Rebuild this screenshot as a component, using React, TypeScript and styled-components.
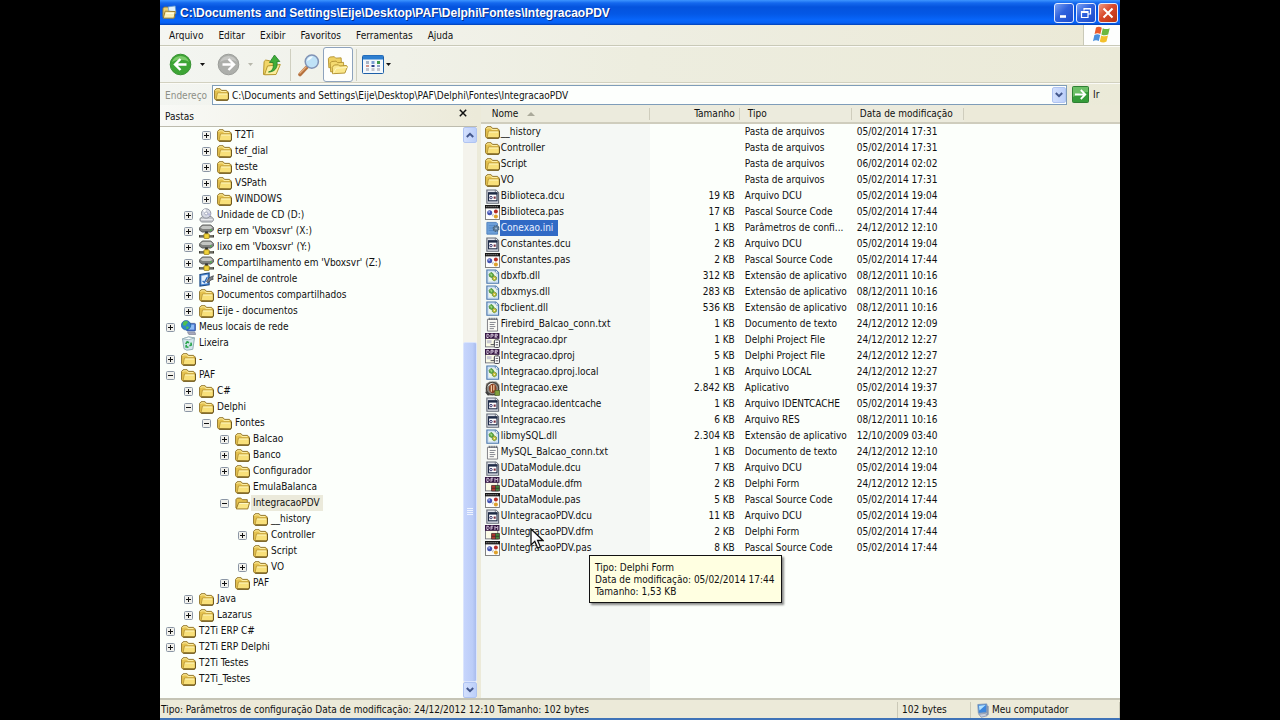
import React from 'react';
import styled, { createGlobalStyle, css } from 'styled-components';

const GlobalStyle = createGlobalStyle`
  * { box-sizing: border-box; }
  body {
    margin: 0;
    background: #000;
    color: #111;
    font-family: "DejaVu Sans Condensed", "Noto Sans", sans-serif;
    font-size: 10px;
    line-height: 16px;
  }
  button, input { font: inherit; color: inherit; }
  button { margin: 0; padding: 0; border: 0; background: none; cursor: default; }
`;

/* ---------- window frame ---------- */

const Window = styled.main`
  position: relative;
  display: flex;
  flex-direction: column;
  height: 100vh;
  min-height: 480px;
  aspect-ratio: 4 / 3;
  margin: 0 auto;
  overflow: hidden;
  background: #ecead9;
  border-bottom: 2px solid #3f73b8;
`;

const TitleBar = styled.header`
  display: flex;
  align-items: center;
  gap: 3px;
  flex: none;
  height: 25px;
  padding: 0 2px;
  background: linear-gradient(#3d95ff 0, #1468ee 3px, #0453dd 7px, #0458e6 14px, #0866fb 20px, #0660f3 23px, #0240b4 25px);
`;

const Title = styled.h1`
  flex: 1;
  margin: 0;
  color: #fff;
  font-size: 12px;
  font-weight: 700;
  font-family: "Liberation Sans", Arial, sans-serif;
  text-shadow: 1px 1px 0 #0a2f8a;
  white-space: nowrap;
`;

const Captions = styled.div`
  display: flex;
  gap: 2px;
`;

const CaptionButton = styled.button<{ $close?: boolean }>`
  display: grid;
  place-items: center;
  width: 20px;
  height: 20px;
  border: 1px solid #e4ecff;
  border-radius: 3px;
  background: ${(p) =>
    p.$close
      ? 'linear-gradient(135deg, #ee9a80, #d9482a 45%, #b8330f)'
      : 'linear-gradient(135deg, #7ba1f4, #2f62dd 45%, #1b4bcc)'};
`;

const MenuRow = styled.div`
  display: flex;
  flex: none;
  height: 21px;
  border-bottom: 1px solid #c9c9b8;
  background: linear-gradient(90deg, #f5f6f2, #eeeee2 50%, #ebe9d6);
`;

const MenuBar = styled.nav`
  display: flex;
  flex: 1;
  gap: 15px;
  padding-left: 9px;
`;

const MenuItem = styled.button`
  height: 20px;
  padding-top: 2px;
`;

const Flag = styled.div`
  display: grid;
  place-items: center;
  width: 37px;
  border-left: 1px solid #c9c9b8;
  background: #fdfefd;
`;

const ToolBar = styled.div`
  display: flex;
  align-items: center;
  flex: none;
  height: 37px;
  padding-left: 8px;
  border-top: 1px solid #fbfbf7;
  border-bottom: 1px solid #d2d1c0;
  background: linear-gradient(90deg, #f3f5f1, #ededdf 50%, #ebead8);
`;

const ToolButton = styled.button<{ $w: number; $on?: boolean }>`
  display: grid;
  place-items: center;
  width: ${(p) => p.$w}px;
  height: 35px;
  ${(p) =>
    p.$on &&
    css`
      border: 1px solid #8ea3bd;
      border-radius: 3px;
      background: #fdfefd;
    `}
`;

const ToolSeparator = styled.span`
  width: 1px;
  height: 32px;
  margin: 0 3px;
  background: #cfcfc0;
`;

const AddressBar = styled.form`
  display: flex;
  align-items: center;
  flex: none;
  height: 22px;
  padding-left: 5px;
  border-top: 1px solid #fbfbf7;
  background: linear-gradient(90deg, #f3f5f1, #ededdf 50%, #ebead8);
`;

const AddressLabel = styled.label`
  width: 47px;
  padding-top: 2px;
  color: #8d8f86;
`;

const AddressField = styled.div`
  display: flex;
  align-items: center;
  flex: 1;
  gap: 2px;
  height: 20px;
  padding: 0 0 0 1px;
  border: 1px solid #7f9db9;
  background: #fdfffd;
`;

const AddressInput = styled.input`
  flex: 1;
  min-width: 0;
  height: 18px;
  padding: 2px 0 0 1px;
  border: 0;
  outline: 0;
  background: transparent;
`;

const GoButton = styled.button`
  display: flex;
  align-items: center;
  gap: 4px;
  width: 53px;
  padding-left: 5px;
`;

const ScrollButton = styled.button`
  display: grid;
  place-items: center;
  flex: none;
  width: 14px;
  height: 16px;
  border: 1px solid #b0c4f2;
  border-radius: 2px;
  background: linear-gradient(90deg, #d3e0fd, #bccffa);
`;

/* ---------- panes ---------- */

const Panes = styled.div`
  display: flex;
  flex: 1;
  min-height: 0;
`;

const TreePane = styled.aside`
  display: flex;
  flex-direction: column;
  flex: none;
  width: 33%;
`;

const PaneHead = styled.div`
  display: flex;
  justify-content: space-between;
  align-items: center;
  flex: none;
  height: 22px;
  padding: 0 8px 0 5px;
  border-bottom: 1px solid #bdbcae;
  background: linear-gradient(90deg, #f8f9f6, #ecead9);
`;

const PaneTitle = styled.h2`
  margin: 0;
  padding-top: 2px;
  font-size: 10px;
  font-weight: 400;
`;

const CloseButton = styled.button`
  display: grid;
  place-items: center;
  align-self: flex-start;
  width: 11px;
  height: 16px;
`;

const TreeBody = styled.div`
  display: flex;
  flex: 1;
  min-height: 0;
  background: #fcfffb;
`;

const Tree = styled.div`
  flex: 1;
  min-width: 0;
  overflow: hidden;
`;

const TreeRow = styled.div<{ $depth: number }>`
  display: flex;
  align-items: center;
  height: 16px;
  padding-left: ${(p) => 6 + p.$depth * 18}px;
  white-space: nowrap;
`;

const ExpanderSlot = styled.span`
  display: flex;
  width: 15px;
`;

const Expander = styled.button`
  display: flex;
`;

const NodeLabel = styled.span<{ $current?: boolean }>`
  margin-left: 1px;
  padding: 0 3px 0 2px;
  background: ${(p) => (p.$current ? '#ebeadb' : 'none')};
`;

const ScrollBar = styled.div`
  display: flex;
  flex-direction: column;
  flex: none;
  width: 14px;
  background: #f4f3ec;
`;

const Track = styled.div`
  display: flex;
  flex-direction: column;
  flex: 1;
`;

const Thumb = styled.div`
  display: grid;
  place-items: center;
  flex: none;
  height: 63%;
  margin-top: auto;
  border: 1px solid #dbe5fd;
  border-radius: 2px;
  background: linear-gradient(90deg, #c6d5fc, #bccdf8 70%, #a9bcee);
`;

const Splitter = styled.div`
  flex: none;
  width: 4px;
  background: #ecead9;
`;

const FilePane = styled.section`
  flex: 1;
  min-width: 0;
  overflow: hidden;
  background: linear-gradient(#f5f8f5, #f5f8f5) 0 0 / 169px 100% no-repeat #fcfffb;
`;

const FileTable = styled.table`
  width: 100%;
  table-layout: fixed;
  border-collapse: separate;
  border-spacing: 0;
  white-space: nowrap;
`;

const HeadCell = styled.th<{ $align?: 'right'; $pad: number }>`
  height: 19px;
  padding: 1px ${(p) => (p.$align ? p.$pad : 0)}px 0 ${(p) => (p.$align ? 0 : p.$pad)}px;
  border-bottom: 2px solid #cfcdbd;
  background: linear-gradient(90deg, #cfcdbd, #cfcdbd) 100% 3px / 1px 12px no-repeat #ecebdd;
  font-weight: 400;
  line-height: 16px;
  text-align: ${(p) => p.$align ?? 'left'};

  &:last-child { background: #ecead9; }
`;

const SortMark = styled.svg`
  margin-left: 9px;
  vertical-align: 1px;
`;

const Cell = styled.td<{ $align?: 'right' }>`
  height: 16px;
  padding: 0 ${(p) => (p.$align ? 5 : 0)}px 0 5px;
  text-align: ${(p) => p.$align ?? 'left'};

  &:first-child { padding-left: 4px; }
`;

const FileName = styled.span`
  display: flex;
  align-items: center;
  height: 16px;
`;

const FileLabel = styled.span<{ $selected?: boolean }>`
  padding: 0 5px 0 1px;
  color: ${(p) => (p.$selected ? '#e8f0ff' : 'inherit')};
  background: ${(p) => (p.$selected ? '#316ac5' : 'none')};
`;

/* ---------- status bar ---------- */

const StatusBar = styled.footer`
  display: flex;
  align-items: flex-end;
  flex: none;
  height: 20px;
  border-top: 2px solid #c5c4b5;
  background: #ecead9;
  white-space: nowrap;
`;

const StatusCell = styled.span<{ $w?: number }>`
  display: flex;
  align-items: center;
  gap: 2px;
  flex: ${(p) => (p.$w ? `0 0 ${p.$w}px` : '1')};
  height: 16px;
  padding-left: ${(p) => (p.$w ? 4 : 1)}px;
  border-right: 1px solid #cbc9b8;
`;

/* ---------- overlays ---------- */

const Tooltip = styled.div`
  position: absolute;
  left: 429px;
  top: 555px;
  padding: 6px 6px 4px 5px;
  border: 1px solid #111;
  background: #ffffe1;
  box-shadow: 2px 2px 2px rgba(0, 0, 0, 0.45);
  line-height: 12px;
  white-space: nowrap;
`;

const Pointer = styled.svg`
  position: absolute;
  left: 370px;
  top: 528px;
`;

/* ---------- icons ---------- */

const Icon = ({ size = 15, children }: { size?: number; children: React.ReactNode }) => (
  <svg width={size} height={size} viewBox="0 0 16 16" aria-hidden="true">
    {children}
  </svg>
);

const FolderIcon = () => (
  <Icon>
    <path d="M.6 12.500V3.600L2.300 1.800h4.200l1.500 1.800h5.400l1.600 1.600v7.300l-1 1.500H2z" fill="#e6c350" stroke="#8f7228" strokeWidth="1" />
    <path d="M1.700 4.200 2.700 3H6l1.300 1.800h5.700" fill="none" stroke="#fdf0a8" strokeWidth="1" />
    <path d="M2.200 13.400 3.600 6.400h11.600v6l-1.200 1.400z" fill="#f8e07a" stroke="#b08e30" strokeWidth=".8" />
    <path d="M4.400 7.500h9.600" stroke="#fff8c0" />
    <path d="M2.500 14h11.800l1.200-1.500V6" fill="none" stroke="#6f5a20" strokeWidth="1.100" />
  </Icon>
);

const OpenFolderIcon = () => (
  <Icon>
    <path d="M1 12.800V3.800L2.400 2.200h3.800l1.500 1.700h5.400v9z" fill="#e6c350" stroke="#8f7228" />
    <path d="m1.400 13.800 2.600-7h11.600l-2 7z" fill="#fae685" stroke="#967828" />
    <path d="M4.800 7.900h9.400" stroke="#fffbd0" />
  </Icon>
);

const WindowFolderIcon = () => (
  <Icon>
    <path d="M1 13V3.800L2.400 2.200h3.800l1.500 1.700h5.800V13z" fill="#e8cf73" stroke="#8f7a3c" />
    <path d="m6.500 2 7.500-1 1 8-7 1z" fill="#dff0fb" stroke="#6aa0cf" strokeWidth=".8" />
    <path d="m1.400 14 2-7.400 10.800.4-1.400 7z" fill="#fbf0b4" stroke="#967828" />
    <path d="M4.600 9h8" stroke="#fffce6" />
  </Icon>
);

const CdIcon = () => (
  <Icon>
    <path d="M1 11.200 4 9h9l2.300 2.400v2L13.600 15H3L1 13.400z" fill="#c2c4c9" stroke="#777b82" strokeWidth=".8" />
    <path d="M2 12.400h12.600" stroke="#f2f3f5" />
    <circle cx="7.600" cy="5.800" r="5" fill="#d6d9e4" stroke="#858995" strokeWidth=".9" />
    <path d="M7.600 5.800 4 2.600A5 5 0 0 1 7 1z" fill="#fff" />
    <path d="m7.600 5.800 4 2.600a5 5 0 0 0 .8-2.600z" fill="#b6b7da" />
    <circle cx="7.600" cy="5.800" r="1.600" fill="#fff" stroke="#8a8fa6" strokeWidth=".7" />
  </Icon>
);

const NetDriveIcon = () => (
  <Icon>
    <path d="M.6 4 3.600 1h9l3 3v2.400L12.600 8.600H3.400L.6 6.600z" fill="#80827f" stroke="#444644" strokeWidth=".8" />
    <path d="M1.400 4 4 1.900h8.400L14.600 4l-2.400 1.200H3.800z" fill="#c4c6c3" />
    <circle cx="12.600" cy="6.400" r=".9" fill="#3ac13a" />
    <path d="M8 8v3" stroke="#333" strokeWidth="3" />
    <path d="M0 11.800h16v2.600H0z" fill="#3c3c34" />
    <path d="M1 12.400h14v.8H1z" fill="#b9b9ab" />
    <rect x="5.300" y="10.400" width="5.600" height="5" rx=".6" fill="#f2d43a" stroke="#8d761a" strokeWidth=".8" />
  </Icon>
);

const ControlPanelIcon = () => (
  <Icon>
    <path d="M1 2.600 10.800 1v12.600L1 15z" fill="#4d8bd8" stroke="#1d4a84" strokeWidth="1.200" />
    <path d="M2.600 4 9.200 3v9L2.600 13z" fill="#e6f1fc" />
    <path d="m3.800 9.600 2 1.600 3-5.600" fill="none" stroke="#2b68b8" strokeWidth="1.500" />
    <path d="m8 10 3-4 4.400-2-1 2.600 1 1-2.600.9-3.400 3z" fill="#7c8085" stroke="#3c3f44" strokeWidth=".8" />
  </Icon>
);

const NetworkIcon = () => (
  <Icon>
    <rect x="6" y="3.600" width="9.400" height="8.200" rx="1" fill="#4a76d0" stroke="#304d92" strokeWidth=".8" />
    <rect x="7.600" y="5" width="6.400" height="5.200" fill="#8fbcf6" />
    <path d="M7 13.200h8l.6 2.300H8.400z" fill="#a6a9be" stroke="#6a6d84" strokeWidth=".6" />
    <circle cx="5.400" cy="5.600" r="5" fill="#2f86cc" stroke="#1c5a92" strokeWidth=".7" />
    <path d="M2.400 2.400c2-1.800 4.600-1.400 5 0 .3 1.400-1.700 1.400-2 2.800S3 6 2 5.200zM5.400 7c1.800-.3 3 .2 3 1.200L6 10z" fill="#4fc04f" />
  </Icon>
);

const BinIcon = () => (
  <Icon>
    <path d="m1.600 3 1.600 10.600 3 1.600 6.400-1L14.400 2 8 1z" fill="#d3e6ec" stroke="#85a2ad" strokeWidth=".9" />
    <path d="M1.600 3 8.400 4l6-2L8 1z" fill="#f6fbfc" stroke="#8fa9b3" strokeWidth=".8" />
    <path d="m5 8.600 1.600-2.400 2 1M10.600 7l.4 2.600-2 .8M8 12l-2.600-.4.200-2" fill="none" stroke="#2aa54a" strokeWidth="1.700" />
  </Icon>
);

const PlusBox = ({ open }: { open: boolean }) => (
  <svg width="9" height="9" viewBox="0 0 9 9" aria-hidden="true">
    <rect x=".5" y=".5" width="8" height="8" rx="1" fill="#f1f1ec" stroke="#8b96a5" />
    <path d={open ? 'M2 4.500h5' : 'M2 4.500h5M4.500 2v5'} stroke="#111" />
  </svg>
);

const Page = ({ fill, edge }: { fill: string; edge: string }) => (
  <>
    <path d="M2 1h9.500L14.500 4v11.200H2z" fill={fill} stroke={edge} strokeWidth="1.200" />
    <path d="M11 1v3.400h3.400" fill="#fff" stroke={edge} strokeWidth=".9" />
  </>
);

const DcuIcon = () => (
  <Icon>
    <Page fill="#dfe2ea" edge="#666c78" />
    <rect x="3.800" y="4" width="9" height="8.600" fill="#fff" stroke="#1f2c48" strokeWidth="1.200" />
    <path d="M3.800 5h9" stroke="#1f2c48" strokeWidth="2" />
    <circle cx="6.400" cy="9.200" r="1.300" fill="none" stroke="#2b2b66" strokeWidth="1" />
    <path d="M9.200 8h2.200v2.400H9.200z" fill="#7a2f42" />
  </Icon>
);

const PasIcon = () => (
  <Icon>
    <rect x=".6" y="2" width="14.800" height="13.400" fill="#fdfdfd" stroke="#6c6c6c" strokeWidth=".9" />
    <path d="M0 1.800h16" stroke="#161616" strokeWidth="3.600" />
    <path d="M1.500 1.700h13" stroke="#a8a8a8" strokeWidth="1.200" strokeDasharray="1 1.200" />
    <circle cx="5" cy="8.200" r="2.700" fill="#4252b2" />
    <circle cx="4.400" cy="7.400" r=".9" fill="#b7c1f1" />
    <circle cx="11.600" cy="7" r="2.100" fill="#b42a24" />
    <circle cx="11.600" cy="12.200" r="2.200" fill="#dfa12a" />
    <path d="M8.800 9.500 8 12" stroke="#999" strokeWidth=".8" />
  </Icon>
);

const IniIcon = () => (
  <Icon>
    <path d="M2 1.500h10l1.400 1.400V14H2z" fill="#6c9fd8" stroke="#5283bf" />
    <path d="M4 5h6M4 7.500h5M4 10h6" stroke="#4f86c6" />
    <circle cx="11.800" cy="8" r="3" fill="#5d7c9a" stroke="#46647f" strokeWidth="1.300" strokeDasharray="1.500 .8" />
    <circle cx="11.800" cy="8" r="1" fill="#a5c2dd" />
  </Icon>
);

const DllIcon = () => (
  <Icon>
    <Page fill="#cfe2f5" edge="#4c78ac" />
    <rect x="4" y="3.400" width="8" height="9.600" rx="1" fill="#eef6e6" />
    <path d="m4.400 5.600 2-2 2.400 1.600.2 2.400-2 1.400-2.200-1z" fill="#69b548" stroke="#37802f" strokeWidth=".8" />
    <path d="m7.800 8.800 2-1.600 2.400 1.600-.2 2.600-2.200 1.200-2-1.400z" fill="#cfc03a" stroke="#4f8430" strokeWidth=".8" />
    <path d="m6 5.600 1.200 1M9.400 9.600l1.200.8" stroke="#f4fbe8" />
  </Icon>
);

const TxtIcon = () => (
  <Icon>
    <path d="M2.600 2.400h10.800V15H2.600z" fill="#fbfbf6" stroke="#7a7a80" />
    <path d="M4 2h9" stroke="#4d5560" strokeWidth="2.200" strokeDasharray="1 1" />
    <path d="M5 5.800h6.400M5 8h5M5 10.200h6M5 12.400h4.500" stroke="#71747e" strokeWidth=".9" />
  </Icon>
);

const BadgeIcon = ({ form }: { form?: boolean }) => (
  <Icon>
    <rect x=".6" y="5" width="13" height="9.800" fill="#fbfbe6" stroke="#6a6a73" strokeWidth=".9" />
    <rect width="15.400" height="6.200" fill="#351743" />
    <path
      d={
        form
          ? 'M2 1.300v3.500h1.400l.9-.9V2.200l-.9-.9zM6.400 5.200V1.300h2.400M6.400 3.200h2M10.600 5.200V1.500l1.500 1.700 1.500-1.700v3.700'
          : 'M2 1.300v3.500h1.400l.9-.9V2.200l-.9-.9zM6.400 5.200V1.300h2.200v2H6.800M10.800 5.200V1.300H13v1.900h-2l2.200 2'
      }
      fill="none"
      stroke="#f1e2f4"
      strokeWidth=".9"
    />
    {form ? (
      <>
        <rect x="7" y="9" width="4.200" height="5.800" fill="#b5352f" />
        <rect x="11.200" y="9" width="4.200" height="5.800" fill="#3f8a3d" />
        <path d="M7 9h8.400v6H7zM11.200 9v6M7 12h8.400" fill="none" stroke="#3a2a26" strokeWidth=".8" />
      </>
    ) : (
      <>
        <rect x="2" y="7.600" width="5" height="3.400" fill="#c9c9d4" />
        <path d="M6 12.400h4V9" fill="none" stroke="#45454d" />
        <rect x="10" y="7.400" width="5.400" height="8" rx="1" fill="#fff" stroke="#3a3a42" />
        <path d="M11.400 10h2.600M11.400 12.600h2.600" stroke="#3a3a42" strokeWidth=".9" />
      </>
    )}
  </Icon>
);

const ExeIcon = () => (
  <Icon>
    <path d="M1 3 5 .6h7L15.400 4v8l-3 3.400H4L.6 12z" fill="#8a8780" />
    <path d="M2 6a7 7 0 0 1 9-4.600L6 4z" fill="#e8e6e0" />
    <circle cx="8" cy="8" r="6.600" fill="none" stroke="#3f3c39" strokeWidth="1.100" />
    <ellipse cx="8.200" cy="8" rx="4" ry="5" fill="#8c3f22" />
    <path d="M6.800 4.500v7M9.400 4v6" stroke="#f2cfa6" strokeWidth="1.300" />
    <rect x="10.600" y="10" width="5" height="5.400" fill="#7fa03c" stroke="#4a5b24" strokeWidth=".7" />
    <path d="M1 11.600 4 15" stroke="#3d3d3d" strokeWidth="2" />
  </Icon>
);

const ComputerIcon = () => (
  <Icon>
    <path d="M3 1.600 12.600 1v9L3.600 11z" fill="#3c86dd" stroke="#7f97b8" />
    <path d="m4.200 2.800 7.200-.6L4.800 8z" fill="#b5e3ff" />
    <path d="m12.800 2.400 1.800 1v9l-2.600 1z" fill="#8795ae" />
    <path d="m4 12 7-1 2 2.600-6.400 1.600z" fill="#c9cfdc" stroke="#7481a0" strokeWidth=".7" />
  </Icon>
);

const FlagIcon = () => (
  <svg width="20" height="18" viewBox="0 0 20 18" aria-hidden="true">
    <path d="M4 1.600c2-1.100 4-.9 5.800.1L8.400 8c-1.900-1-3.800-1-5.800 0z" fill="#ea5b2b" />
    <path d="M10.800 2.200c2.400 1.200 4.600 1.100 6.900 0l-1.500 6.300c-2.300 1.100-4.600 1-6.800-.1z" fill="#6cb840" />
    <path d="M2.400 9c2-1 4-.9 5.800 0l-1.400 6c-2-.9-3.800-.9-5.800.2z" fill="#4a90dd" />
    <path d="M9.200 9.400c2.300 1.100 4.500 1.200 6.800.1l-1.500 6.100c-2.300 1.200-4.500 1.100-6.700 0z" fill="#f3c02c" />
  </svg>
);

const RoundArrow = ({ back }: { back?: boolean }) => (
  <svg width="23" height="23" viewBox="0 0 23 23" aria-hidden="true">
    <circle cx="11.500" cy="11.500" r="10.300" fill={back ? '#3da535' : '#adafab'} stroke={back ? '#35902f' : '#9a9c98'} />
    <path d="M3 9a9 9 0 0 1 17 0c-4-3-12-3-17 0z" fill={back ? '#7ccb6a' : '#c6c7c4'} />
    <path
      d={back ? 'M17.500 11.500H6.500M11.500 6l-5.500 5.500 5.500 5.500' : 'M5.500 11.500h11M11.500 6l5.500 5.500-5.500 5.500'}
      fill="none"
      stroke="#fff"
      strokeWidth="2.400"
    />
  </svg>
);

const Caret = ({ faint }: { faint?: boolean }) => (
  <svg width="5" height="3" viewBox="0 0 5 3" aria-hidden="true">
    <path d="M0 0h5L2.500 3z" fill={faint ? '#b7b7ac' : '#111'} />
  </svg>
);

const UpFolderIcon = () => (
  <svg width="20" height="22" viewBox="0 0 20 22" aria-hidden="true">
    <path d="m1.500 20.500.6-13 1.500-1.400 4 .6 1 1.700 6 .4-1.400 11z" fill="#f1d668" stroke="#b8982f" />
    <path d="m2.500 20.800 3-8.800 12.800-1.500-4.300 10z" fill="#fbee9d" stroke="#b8982f" />
    <path d="M6.500 18c4-1 5.500-4 4.500-9.500H7.500L12.500 1l5.300 6.500H15C16 14 12.500 18 6.500 18z" fill="#3fae39" stroke="#257f26" strokeWidth=".8" />
  </svg>
);

const SearchIcon = () => (
  <svg width="24" height="24" viewBox="0 0 24 24" aria-hidden="true">
    <path d="m10 14-7 7.500" stroke="#b5713e" strokeWidth="3.600" strokeLinecap="round" />
    <path d="m9.500 13.500-7 7" stroke="#e6ae7d" strokeWidth="1.200" />
    <circle cx="14.800" cy="8.600" r="6.600" fill="#bfe2f7" stroke="#8193b5" strokeWidth="1.500" />
    <path d="M10 8a5 5 0 0 1 6-4.500c-1.500 2-3.500 3.500-6 4.500z" fill="#f0faff" />
  </svg>
);

const FoldersIcon = () => (
  <svg width="22" height="22" viewBox="0 0 24 24" aria-hidden="true">
    <path d="m2 15-.5-10L3 3.300l5-.4 1.400 1.600 6-.3.500 9z" fill="#efd162" stroke="#b59432" />
    <path d="m4 19.500-.5-9.500 1.500-1.800 5-.4 1.500 1.700 6.500-.4.500 9z" fill="#f4da70" stroke="#b59432" />
    <path d="m6 21.500-.3-7L8 12l4.500-.2 1.300 1.300 7.500-.6.900 1.500-2.700 6.800z" fill="#fae78b" stroke="#b08e2c" />
    <path d="m7 21 3-5.500 12-.8" fill="none" stroke="#fff7c4" />
  </svg>
);

const ViewsIcon = () => (
  <svg width="22" height="19" viewBox="0 0 22 19" aria-hidden="true">
    <rect x=".5" y=".5" width="21" height="18" rx="1" fill="#f4f8fb" stroke="#1d5fa8" />
    <path d="M1 2.500h20" stroke="#2e7fd0" strokeWidth="4" />
    <path d="M4 6h3v3H4z" fill="#a9b4c5" />
    <path d="M9.500 6h3v3h-3z" fill="#7c9ed2" />
    <path d="M15 6h3v3h-3z" fill="#3f9a4c" />
    <path d="M4 10h3v2H4z" fill="#d0958c" />
    <path d="M9.500 10h3v2h-3z" fill="#2a3f88" />
    <path d="M15 10h3v2h-3z" fill="#8f9fc8" />
    <path d="M4 13h3v3H4zM9.500 13h3v3h-3zM15 13h3v3h-3z" fill="#c2c4cc" />
  </svg>
);

const Chevron = ({ up }: { up?: boolean }) => (
  <svg width="8" height="6" viewBox="0 0 8 6" aria-hidden="true">
    <path d={up ? 'M.8 5 4 1.800 7.200 5' : 'M.8 1 4 4.200 7.200 1'} fill="none" stroke="#43578c" strokeWidth="2" />
  </svg>
);

const GoIcon = () => (
  <svg width="17" height="17" viewBox="0 0 17 17" aria-hidden="true">
    <rect x=".5" y=".5" width="16" height="16" rx="1" fill="#359c3a" stroke="#2f7f34" />
    <path d="M1 1h15v5C10 6 5 8 1 11z" fill="#6cbf66" />
    <path d="M3 8.500h10M8.800 4l4.500 4.500L8.800 13" fill="none" stroke="#fff" strokeWidth="1.800" />
  </svg>
);

/* ---------- data ---------- */

const treeIcons = {
  folder: FolderIcon,
  open: OpenFolderIcon,
  cd: CdIcon,
  net: NetDriveIcon,
  panel: ControlPanelIcon,
  places: NetworkIcon,
  bin: BinIcon,
};

type TreeKind = keyof typeof treeIcons;
type TreeNode = [depth: number, state: '+' | '-' | '', label: string, kind?: TreeKind];

const nodes: TreeNode[] = [
  [2, '+', 'T2Ti'],
  [2, '+', 'tef_dial'],
  [2, '+', 'teste'],
  [2, '+', 'VSPath'],
  [2, '+', 'WINDOWS'],
  [1, '+', 'Unidade de CD (D:)', 'cd'],
  [1, '+', "erp em 'Vboxsvr' (X:)", 'net'],
  [1, '+', "lixo em 'Vboxsvr' (Y:)", 'net'],
  [1, '+', "Compartilhamento em 'Vboxsvr' (Z:)", 'net'],
  [1, '+', 'Painel de controle', 'panel'],
  [1, '+', 'Documentos compartilhados'],
  [1, '+', 'Eije - documentos'],
  [0, '+', 'Meus locais de rede', 'places'],
  [0, '', 'Lixeira', 'bin'],
  [0, '+', '-'],
  [0, '-', 'PAF'],
  [1, '+', 'C#'],
  [1, '-', 'Delphi'],
  [2, '-', 'Fontes'],
  [3, '+', 'Balcao'],
  [3, '+', 'Banco'],
  [3, '+', 'Configurador'],
  [3, '', 'EmulaBalanca'],
  [3, '-', 'IntegracaoPDV', 'open'],
  [4, '', '__history'],
  [4, '+', 'Controller'],
  [4, '', 'Script'],
  [4, '+', 'VO'],
  [3, '+', 'PAF'],
  [1, '+', 'Java'],
  [1, '+', 'Lazarus'],
  [0, '+', 'T2Ti ERP C#'],
  [0, '+', 'T2Ti ERP Delphi'],
  [0, '', 'T2Ti Testes'],
  [0, '', 'T2Ti_Testes'],
];

const fileIcons = {
  folder: <FolderIcon />,
  dcu: <DcuIcon />,
  pas: <PasIcon />,
  ini: <IniIcon />,
  dll: <DllIcon />,
  txt: <TxtIcon />,
  dpr: <BadgeIcon />,
  dfm: <BadgeIcon form />,
  exe: <ExeIcon />,
};

type FileRow = [kind: keyof typeof fileIcons, name: string, size: string, type: string, date: string];

const files: FileRow[] = [
  ['folder', '__history', '', 'Pasta de arquivos', '05/02/2014 17:31'],
  ['folder', 'Controller', '', 'Pasta de arquivos', '05/02/2014 17:31'],
  ['folder', 'Script', '', 'Pasta de arquivos', '06/02/2014 02:02'],
  ['folder', 'VO', '', 'Pasta de arquivos', '05/02/2014 17:31'],
  ['dcu', 'Biblioteca.dcu', '19 KB', 'Arquivo DCU', '05/02/2014 19:04'],
  ['pas', 'Biblioteca.pas', '17 KB', 'Pascal Source Code', '05/02/2014 17:44'],
  ['ini', 'Conexao.ini', '1 KB', 'Parâmetros de confi...', '24/12/2012 12:10'],
  ['dcu', 'Constantes.dcu', '2 KB', 'Arquivo DCU', '05/02/2014 19:04'],
  ['pas', 'Constantes.pas', '2 KB', 'Pascal Source Code', '05/02/2014 17:44'],
  ['dll', 'dbxfb.dll', '312 KB', 'Extensão de aplicativo', '08/12/2011 10:16'],
  ['dll', 'dbxmys.dll', '283 KB', 'Extensão de aplicativo', '08/12/2011 10:16'],
  ['dll', 'fbclient.dll', '536 KB', 'Extensão de aplicativo', '08/12/2011 10:16'],
  ['txt', 'Firebird_Balcao_conn.txt', '1 KB', 'Documento de texto', '24/12/2012 12:09'],
  ['dpr', 'Integracao.dpr', '1 KB', 'Delphi Project File', '24/12/2012 12:27'],
  ['dpr', 'Integracao.dproj', '5 KB', 'Delphi Project File', '24/12/2012 12:27'],
  ['dll', 'Integracao.dproj.local', '1 KB', 'Arquivo LOCAL', '24/12/2012 12:27'],
  ['exe', 'Integracao.exe', '2.842 KB', 'Aplicativo', '05/02/2014 19:37'],
  ['dcu', 'Integracao.identcache', '1 KB', 'Arquivo IDENTCACHE', '05/02/2014 19:43'],
  ['dcu', 'Integracao.res', '6 KB', 'Arquivo RES', '08/12/2011 10:16'],
  ['dll', 'libmySQL.dll', '2.304 KB', 'Extensão de aplicativo', '12/10/2009 03:40'],
  ['txt', 'MySQL_Balcao_conn.txt', '1 KB', 'Documento de texto', '24/12/2012 12:10'],
  ['dcu', 'UDataModule.dcu', '7 KB', 'Arquivo DCU', '05/02/2014 19:04'],
  ['dfm', 'UDataModule.dfm', '2 KB', 'Delphi Form', '24/12/2012 12:15'],
  ['pas', 'UDataModule.pas', '5 KB', 'Pascal Source Code', '05/02/2014 17:44'],
  ['dcu', 'UIntegracaoPDV.dcu', '11 KB', 'Arquivo DCU', '05/02/2014 19:04'],
  ['dfm', 'UIntegracaoPDV.dfm', '2 KB', 'Delphi Form', '05/02/2014 17:44'],
  ['pas', 'UIntegracaoPDV.pas', '8 KB', 'Pascal Source Code', '05/02/2014 17:44'],
];

const path = 'C:\\Documents and Settings\\Eije\\Desktop\\PAF\\Delphi\\Fontes\\IntegracaoPDV';
const menus = ['Arquivo', 'Editar', 'Exibir', 'Favoritos', 'Ferramentas', 'Ajuda'];

export default function App() {
  return (
    <>
      <GlobalStyle />
      <Window>
        <TitleBar>
          <WindowFolderIcon />
          <Title>{path}</Title>
          <Captions>
            <CaptionButton aria-label="Minimizar">
              <svg width="12" height="12" viewBox="0 0 12 12"><path d="M2 9.500h6" stroke="#fff" strokeWidth="2.600" /></svg>
            </CaptionButton>
            <CaptionButton aria-label="Restaurar">
              <svg width="12" height="12" viewBox="0 0 12 12">
                <path d="M4 3.500V1.500h6.500v5.500H8.500M1.500 4.500H8v6H1.500zM1.500 5.500H8M4 2h6.500" fill="none" stroke="#fff" strokeWidth="1.200" />
              </svg>
            </CaptionButton>
            <CaptionButton $close aria-label="Fechar">
              <svg width="12" height="12" viewBox="0 0 12 12"><path d="m1.500 1.500 9 9m0-9-9 9" stroke="#fff" strokeWidth="2" /></svg>
            </CaptionButton>
          </Captions>
        </TitleBar>

        <MenuRow>
          <MenuBar>
            {menus.map((m) => (
              <MenuItem key={m}>{m}</MenuItem>
            ))}
          </MenuBar>
          <Flag><FlagIcon /></Flag>
        </MenuRow>

        <ToolBar>
          <ToolButton $w={24} aria-label="Voltar"><RoundArrow back /></ToolButton>
          <ToolButton $w={21} aria-label="Histórico"><Caret /></ToolButton>
          <ToolButton $w={30} aria-label="Avançar"><RoundArrow /></ToolButton>
          <ToolButton $w={14} aria-label="Próximas páginas"><Caret faint /></ToolButton>
          <ToolButton $w={30} aria-label="Acima"><UpFolderIcon /></ToolButton>
          <ToolSeparator />
          <ToolButton $w={29} aria-label="Pesquisar"><SearchIcon /></ToolButton>
          <ToolButton $w={30} $on aria-label="Pastas"><FoldersIcon /></ToolButton>
          <ToolSeparator />
          <ToolButton $w={26} aria-label="Modos de exibição"><ViewsIcon /></ToolButton>
          <ToolButton $w={5} aria-label="Escolher modo"><Caret /></ToolButton>
        </ToolBar>

        <AddressBar onSubmit={(e) => e.preventDefault()}>
          <AddressLabel htmlFor="address">Endereço</AddressLabel>
          <AddressField>
            <FolderIcon />
            <AddressInput id="address" defaultValue={path} />
            <ScrollButton type="button" aria-label="Abrir lista"><Chevron /></ScrollButton>
          </AddressField>
          <GoButton type="submit"><GoIcon />Ir</GoButton>
        </AddressBar>

        <Panes>
          <TreePane>
            <PaneHead>
              <PaneTitle>Pastas</PaneTitle>
              <CloseButton aria-label="Fechar pastas">
                <svg width="8" height="8" viewBox="0 0 8 8"><path d="m.8.8 6.400 6.400m0-6.400L.8 7.200" stroke="#111" strokeWidth="1.500" /></svg>
              </CloseButton>
            </PaneHead>
            <TreeBody>
              <Tree role="tree">
                {nodes.map(([depth, state, label, kind = 'folder'], i) => {
                  const Glyph = treeIcons[kind];
                  return (
                    <TreeRow key={i} $depth={depth} role="treeitem" aria-level={depth + 1}>
                      <ExpanderSlot>
                        {state && (
                          <Expander aria-label={state === '+' ? 'Expandir' : 'Recolher'}>
                            <PlusBox open={state === '-'} />
                          </Expander>
                        )}
                      </ExpanderSlot>
                      <Glyph />
                      <NodeLabel $current={kind === 'open'}>{label}</NodeLabel>
                    </TreeRow>
                  );
                })}
              </Tree>
              <ScrollBar>
                <ScrollButton aria-label="Rolar para cima"><Chevron up /></ScrollButton>
                <Track>
                  <Thumb>
                    <svg width="6" height="8" viewBox="0 0 6 8" aria-hidden="true">
                      <path d="M0 .5h6M0 2.500h6M0 4.500h6M0 6.500h6" stroke="#eef3ff" />
                    </svg>
                  </Thumb>
                </Track>
                <ScrollButton aria-label="Rolar para baixo"><Chevron /></ScrollButton>
              </ScrollBar>
            </TreeBody>
          </TreePane>
          <Splitter />
          <FilePane>
            <FileTable>
              <colgroup>
                <col width="169" />
                <col width="90" />
                <col width="112" />
                <col width="112" />
                <col />
              </colgroup>
              <thead>
                <tr>
                  <HeadCell $pad={11}>
                    Nome
                    <SortMark width="8" height="4" viewBox="0 0 8 4"><path d="M0 4h8L4 0z" fill="#aaa99a" /></SortMark>
                  </HeadCell>
                  <HeadCell $pad={5} $align="right">Tamanho</HeadCell>
                  <HeadCell $pad={8}>Tipo</HeadCell>
                  <HeadCell $pad={8}>Data de modificação</HeadCell>
                  <HeadCell $pad={0} aria-hidden="true" />
                </tr>
              </thead>
              <tbody>
                {files.map(([kind, name, size, type, date]) => (
                  <tr key={name}>
                    <Cell>
                      <FileName>
                        {fileIcons[kind]}
                        <FileLabel $selected={kind === 'ini'}>{name}</FileLabel>
                      </FileName>
                    </Cell>
                    <Cell $align="right">{size}</Cell>
                    <Cell>{type}</Cell>
                    <Cell>{date}</Cell>
                    <td />
                  </tr>
                ))}
              </tbody>
            </FileTable>
          </FilePane>
        </Panes>

        <StatusBar>
          <StatusCell>Tipo: Parâmetros de configuração Data de modificação: 24/12/2012 12:10 Tamanho: 102 bytes</StatusCell>
          <StatusCell $w={73}>102 bytes</StatusCell>
          <StatusCell $w={149}><ComputerIcon />Meu computador</StatusCell>
        </StatusBar>

        <Pointer width="14" height="22" viewBox="0 0 14 22" aria-hidden="true">
          <path d="M1 1v16l3.800-3.600L7.600 20l2.800-1.200-2.800-6.300H13z" fill="#fff" stroke="#111" strokeWidth="1.300" />
        </Pointer>
        <Tooltip role="tooltip">
          Tipo: Delphi Form
          <br />
          Data de modificação: 05/02/2014 17:44
          <br />
          Tamanho: 1,53 KB
        </Tooltip>
      </Window>
    </>
  );
}
